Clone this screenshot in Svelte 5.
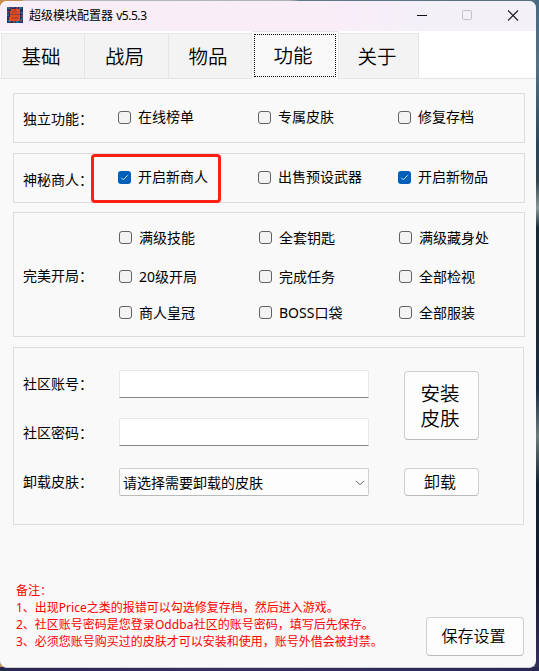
<script lang="ts">
	const tabs = ['基础', '战局', '物品', '功能', '关于'];
	let activeTab = $state('功能');

	const groups = $state([
		{
			label: '独立功能：',
			name: 'standalone',
			items: [
				{ text: '在线榜单', checked: false },
				{ text: '专属皮肤', checked: false },
				{ text: '修复存档', checked: false }
			]
		},
		{
			label: '神秘商人：',
			name: 'trader',
			items: [
				{ text: '开启新商人', checked: true, marked: true },
				{ text: '出售预设武器', checked: false },
				{ text: '开启新物品', checked: true }
			]
		},
		{
			label: '完美开局：',
			name: 'start',
			items: [
				{ text: '满级技能', checked: false },
				{ text: '全套钥匙', checked: false },
				{ text: '满级藏身处', checked: false },
				{ text: '20级开局', checked: false },
				{ text: '完成任务', checked: false },
				{ text: '全部检视', checked: false },
				{ text: '商人皇冠', checked: false },
				{ text: 'BOSS口袋', checked: false },
				{ text: '全部服装', checked: false }
			]
		}
	]);
</script>

<div class="desktop">
	<div class="window">
		<header class="titlebar">
			<svg class="logo" width="16" height="16" viewBox="0 0 16 16">
				<rect width="16" height="16" fill="#26335c" />
				<path d="M0 1h2M5 0h2M12 1h3M0 8h2M14 6h2M1 14h3M9 15h3M14 12h2" stroke="#2878a0" stroke-width="1.5" />
				<path d="M2 1h2M9 1h2M0 5h2M14 9h2M6 15h2M13 14h2" stroke="#9c4a58" stroke-width="1.5" />
				<path d="M4 2h9v5H3V4h1zM3 8h10v6H2v-4h1z" fill="#df4e20" />
				<path d="M5 5h5M5 11h6M3 7.5h10M8 2v2" stroke="#983638" />
			</svg>
			<span class="title">超级模块配置器 <span class="version">v5.5.3</span></span>
			<svg class="controls" width="112" height="30" viewBox="0 0 112 30" fill="none">
				<path d="M5 14.5h10" stroke="#111" />
				<rect x="50.5" y="9.5" width="9" height="9" rx="1" stroke="#c5c0c8" />
				<path d="M96 9.5l10 10M106 9.5l-10 10" stroke="#1a1a1a" stroke-width="1.1" />
			</svg>
		</header>

		<nav class="tabs">
			{#each tabs as tab}
				<button class="tab" class:active={tab === activeTab} onclick={() => (activeTab = tab)}>
					<span>{tab}</span>
				</button>
			{/each}
		</nav>

		<main>
			{#each groups as group}
				<section class="panel {group.name}">
					<span class="label">{group.label}</span>
					<div class="options">
						{#each group.items as item}
							<label class="option" class:marked={item.marked}>
								<input type="checkbox" bind:checked={item.checked} />
								<span class="box" class:checked={item.checked}>
									{#if item.checked}
										<svg width="13" height="13" viewBox="0 0 13 13">
											<path d="M3.3 6.8l2 2 4.5-4.5" fill="none" stroke="#d5e9fa" />
										</svg>
									{/if}
								</span>
								<span>{item.text}</span>
							</label>
						{/each}
					</div>
				</section>
			{/each}

			<section class="panel account">
				<div class="fields">
					<span class="label">社区账号：</span>
					<input class="field" type="text" />
					<span class="label">社区密码：</span>
					<input class="field" type="password" />
					<span class="label">卸载皮肤：</span>
					<button class="select">
						<span>请选择需要卸载的皮肤</span>
						<svg width="10" height="6" viewBox="0 0 10 6">
							<path d="M1 .8l4 4 4-4" fill="none" stroke="#555" />
						</svg>
					</button>
				</div>
				<div class="actions">
					<button class="btn install">安装<br />皮肤</button>
					<button class="btn uninstall">卸载</button>
				</div>
			</section>
		</main>

		<footer>
			<div class="notes">
				<p>备注：</p>
				<p>1、出现Price之类的报错可以勾选修复存档，然后进入游戏。</p>
				<p>2、社区账号密码是您登录<span class="wide">Oddba</span>社区的账号密码，填写后先保存。</p>
				<p>3、必须您账号购买过的皮肤才可以安装和使用，账号外借会被封禁。</p>
			</div>
			<button class="btn save">保存设置</button>
		</footer>
	</div>
</div>

<style>
	:global(body) {
		overflow: hidden;
	}

	.desktop {
		box-sizing: border-box;
		width: 539px;
		height: 671px;
		padding-top: 1px;
		background:
			linear-gradient(90deg, #29264f, #38305f 40%, #292852) 0 100% / 100% 4px no-repeat,
			linear-gradient(#486982, #547084 10%, #28455b 22%, #34444e 27%, #8a969a 31%, #172a36 34%, #1e2835 50%, #182c45 58%, #6e7b7c 65%, #142332 72%, #14192b 86%, #35315f) 100% 0 / 4px 100% no-repeat,
			linear-gradient(90deg, #c58f50 22px, #bababa 23px, #aeb2b6 290px, #617989 300px, #526e80);
		font-family: 'Noto Sans', 'Noto Sans CJK SC', sans-serif;
		font-size: 14px;
		color: #000;
	}

	button,
	input {
		font-family: inherit;
		color: inherit;
	}

	.window {
		box-sizing: border-box;
		display: flex;
		flex-direction: column;
		width: 536px;
		height: 667px;
		border-bottom: 1px solid #d0cfd6;
		border-radius: 7px;
		overflow: hidden;
		background: #f9f9f9;
	}

	.titlebar {
		flex: none;
		display: flex;
		align-items: center;
		height: 30px;
		background: linear-gradient(90deg, #f8eef7, #f9edf8 62%, #f3f0f8 80%, #f3f0f8);
	}

	.logo {
		margin: 0 6px 2px 7px;
	}

	.title {
		flex: 1;
		font-size: 12px;
		line-height: 18px;
	}

	.version {
		letter-spacing: -0.45px;
	}

	.controls {
		margin: 0 12px 1px 0;
	}

	.tabs {
		flex: none;
		display: flex;
		align-items: flex-end;
		height: 48px;
		background: linear-gradient(#e5e5e5, #e5e5e5) 0 100% / 100% 1px no-repeat #fff;
	}

	.tab {
		box-sizing: border-box;
		width: 84px;
		height: 46px;
		padding: 1px 4px 0 0;
		border: 1px solid #e5e5e5;
		border-left: none;
		background: #f3f3f3;
		font-size: 19.5px;
		font-weight: 350;
		line-height: 44px;
	}

	.tab:first-child {
		margin-left: 1px;
		border-left: 1px solid #e5e5e5;
	}

	.tab:nth-child(3) {
		width: 83px;
	}

	.tab.active {
		width: 87px;
		height: 48px;
		padding: 2px;
		border-bottom: none;
		background: #f9f9f9;
		line-height: 41px;
	}

	.tab.active span {
		display: block;
		border: 1px dotted #000;
		box-sizing: border-box;
		height: 43px;
		padding-right: 4px;
	}

	.tab:last-child {
		width: 80px;
		padding-right: 3px;
	}

	main {
		display: flex;
		flex-direction: column;
		padding: 14px 11px 0 13px;
	}

	.panel {
		box-sizing: border-box;
		display: flex;
		align-items: center;
		border: 1px solid #dcdcdc;
		padding-left: 9px;
	}

	.label {
		flex: none;
		width: 95px;
		line-height: 20px;
	}

	.standalone {
		height: 50px;
		margin-bottom: 10px;
	}

	.trader {
		height: 50px;
		margin-bottom: 9px;
	}

	.standalone .options,
	.trader .options {
		padding-bottom: 2px;
	}

	.trader .label {
		padding-top: 3px;
	}

	.standalone .label {
		padding-top: 2px;
	}

	.start {
		height: 125px;
		margin-bottom: 10px;
	}

	.start .label {
		width: 96px;
		padding-top: 2px;
	}

	.options {
		display: grid;
		grid-template-columns: repeat(3, 140px);
		grid-auto-rows: 20px;
	}

	/* The middle row sits slightly below centre */
	.start .options {
		grid-template-rows: 39px 36px 20px;
		align-items: start;
		padding-top: 1px;
	}

	.option {
		position: relative;
		display: flex;
		align-items: center;
		gap: 7px;
		line-height: 20px;
		white-space: nowrap;
	}

	.option input {
		display: none;
	}

	.box {
		box-sizing: border-box;
		width: 13px;
		height: 13px;
		border: 1px solid #626262;
		border-radius: 3px;
		background: #f3f3f3;
	}

	.box.checked {
		border: none;
		background: #005fb8;
	}

	.box svg {
		display: block;
	}

	/* Highlight frame drawn over the panel */
	.marked::after {
		content: '';
		position: absolute;
		left: -27px;
		top: -13px;
		box-sizing: border-box;
		width: 130px;
		height: 49px;
		border: 3px solid #ff2015;
		border-radius: 4px;
		pointer-events: none;
	}

	.account {
		width: 511px;
		height: 178px;
		align-items: flex-start;
		padding-top: 22px;
	}

	.fields {
		display: grid;
		grid-template-columns: 96px 250px;
		grid-template-rows: 48px 50px 28px;
		align-items: start;
	}

	.fields .label {
		line-height: 28px;
	}

	.fields .label:nth-of-type(2) {
		padding-top: 1px;
	}

	.field {
		box-sizing: border-box;
		width: 250px;
		height: 28px;
		padding: 0 4px;
		border: 1px solid #e9e9e9;
		border-bottom-color: #868686;
		border-radius: 1px;
		outline: none;
		background: #fff;
	}

	.select {
		display: flex;
		align-items: center;
		justify-content: space-between;
		box-sizing: border-box;
		height: 28px;
		padding: 1px 3px 0 3px;
		border: 1px solid #cfcfcf;
		border-bottom-color: #bababa;
		border-radius: 2px;
		background: #fdfdfd;
		font-size: 14px;
		line-height: 20px;
	}

	.actions {
		display: flex;
		flex-direction: column;
		gap: 28px;
		padding: 1px 0 0 35px;
	}

	.btn {
		box-sizing: border-box;
		padding: 0;
		border: 1px solid #d0d0d0;
		border-bottom-color: #bababa;
		border-radius: 4px;
		background: #fdfdfd;
		font-size: 16px;
		font-weight: 350;
	}

	.install {
		width: 75px;
		height: 69px;
		padding: 1px 3px 0 0;
		font-size: 19.5px;
		line-height: 25px;
	}

	.uninstall {
		width: 75px;
		height: 28px;
		padding-right: 3px;
		line-height: 24px;
	}

	footer {
		display: flex;
		justify-content: space-between;
		padding: 57px 12px 0 16px;
	}

	.notes {
		font-size: 12px;
		line-height: 17px;
		color: #f00;
		white-space: nowrap;
	}

	.notes p {
		margin: 0;
	}

	.wide {
		letter-spacing: 0.1px;
	}

	.save {
		width: 98px;
		height: 39px;
		margin-top: 35px;
		padding: 0 3px 3px 0;
	}
</style>
